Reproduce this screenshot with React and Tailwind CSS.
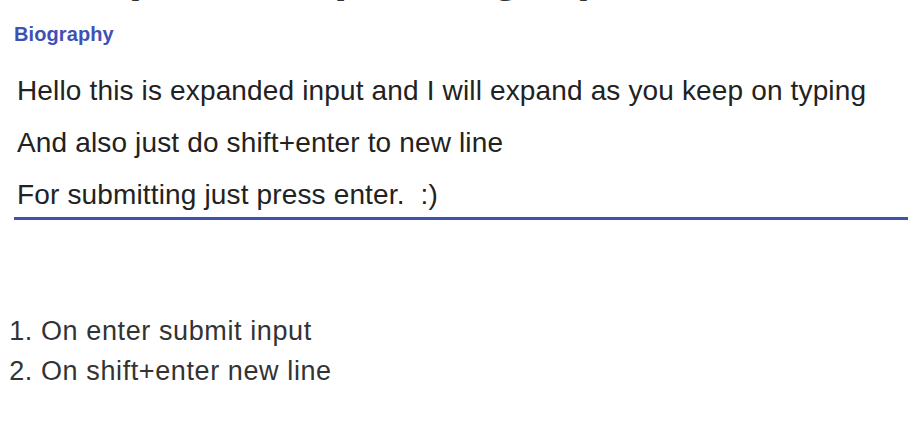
import { useState } from 'react';

const initialText = [
  'Hello this is expanded input and I will expand as you keep on typing',
  'And also just do shift+enter to new line',
  'For submitting just press enter.  :)',
];

export default function App() {
  const [lines] = useState(initialText);

  return (
    <div className="min-h-screen bg-white pl-[14px] font-['Liberation_Sans',Arial,sans-serif]">
      {/* page title, scrolled mostly out of view */}
      <div className="h-[2px] overflow-hidden">
        <h1 className="mt-[-49px] text-[48px] leading-[48px] font-bold text-[#333] whitespace-nowrap">
          Group with expanding input
        </h1>
      </div>

      <label className="mt-[22px] block text-[20px] leading-[20px] font-bold tracking-[0.1px] text-[#3f51b5]">
        Biography
      </label>

      {/* expanding input */}
      <div className="mt-[25px] flex flex-col gap-[8px] border-b-[3px] border-[#3f51b5] pl-[3px] text-[28px] leading-[44px] tracking-[0.15px] text-[#222]">
        {lines.map((line, i) => (
          <div key={i} className="whitespace-pre">
            {line}
          </div>
        ))}
      </div>

      <ol className="mt-[91px] list-decimal pl-[27px] text-[27px] leading-[40px] tracking-[0.6px] text-[#333]">
        <li>On enter submit input</li>
        <li>On shift+enter new line</li>
      </ol>
    </div>
  );
}
